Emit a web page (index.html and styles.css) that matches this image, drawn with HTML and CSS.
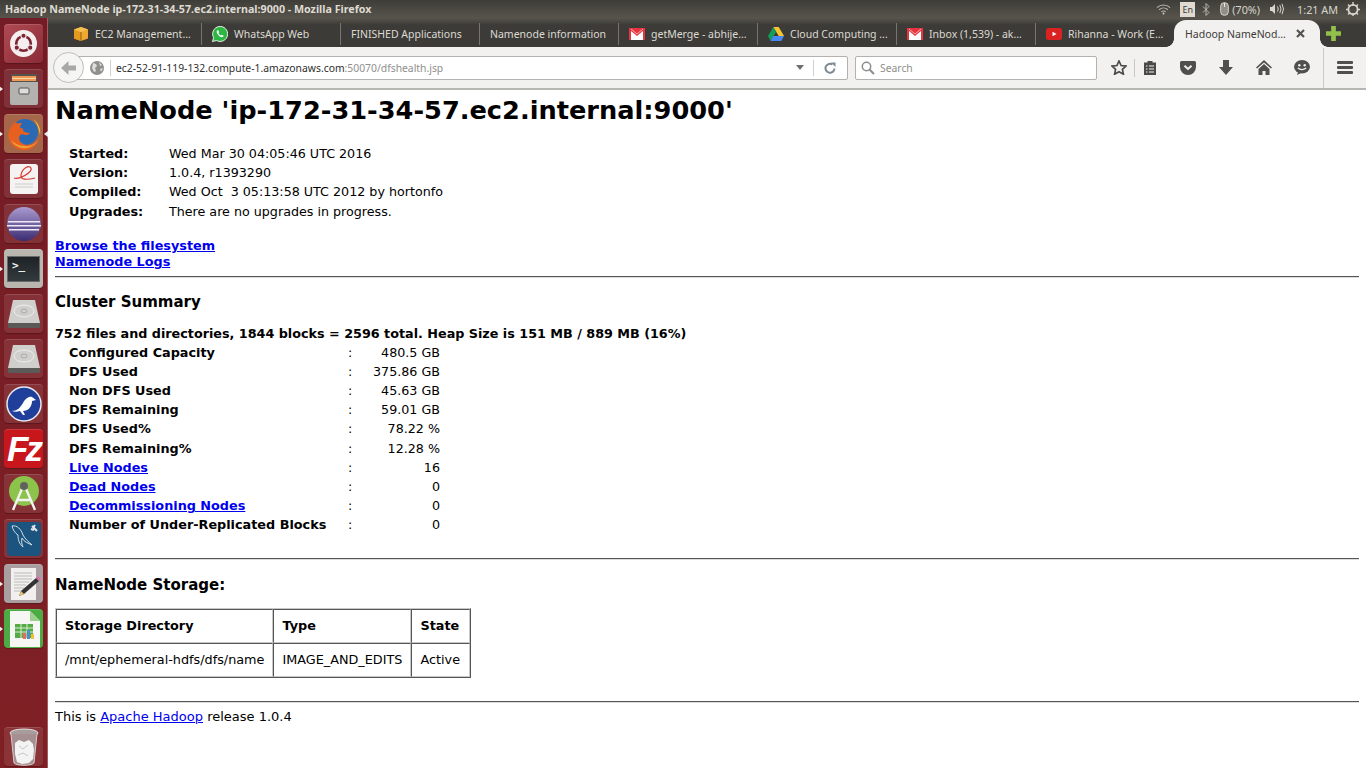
FILE: index.html
```html
<!DOCTYPE html>
<html lang="en">
<head>
  <meta charset="UTF-8" />
  <title>Hadoop NameNode ip-172-31-34-57.ec2.internal:9000</title>
  <link rel="stylesheet" href="styles.css">
</head>
<body>
  <!-- Ubuntu top panel -->
  <div class="panel">
    <div class="win-title">Hadoop NameNode ip-172-31-34-57.ec2.internal:9000 - Mozilla Firefox</div>
    <div class="indicators">
      <svg class="ind-wifi" width="15" height="12" viewBox="0 0 16 12"><path d="M1 4.500C5 .8 11 .8 15 4.500M3.300 6.800C6 4.400 10 4.400 12.700 6.800M5.600 9C7 8 9 8 10.400 9" fill="none" stroke="#b9b7ae" stroke-width="1.100"/><circle cx="8" cy="10.800" r="1" fill="#d8d6cc"/></svg>
      <span class="ind-lang">En</span>
      <svg class="ind-bt" width="8" height="13" viewBox="0 0 8 13"><path d="M1 3.500l6 6-3 3V.5l3 3-6 6" fill="none" stroke="#b9b7ae" stroke-width="1"/></svg>
      <svg class="ind-mouse" width="9" height="14" viewBox="0 0 9 14"><rect x=".7" y=".7" width="7.600" height="12.600" rx="3.500" fill="#8f8d85" stroke="#d8d6cc"/><path d="M4.500 1v4" stroke="#e8e6dc"/></svg>
      <span class="ind-batt">(70%)</span>
      <svg class="ind-vol" width="15" height="12" viewBox="0 0 15 12"><path d="M1 4h2l3-3v10L3 8H1z" fill="#d8d6cc"/><path d="M8.500 3.500q1.500 2.500 0 5M10.800 2q2.400 4 0 8M13 .8q3 5.200 0 10.400" fill="none" stroke="#d8d6cc"/></svg>
      <span class="ind-clock">1:21 AM</span>
      <svg class="ind-gear" width="16" height="16" viewBox="0 0 16 16"><circle cx="8" cy="8.500" r="4.600" fill="none" stroke="#d8d6cc" stroke-width="1.800"/><path d="M8 1v4M8 12v3M1 8.500h3M12 8.500h3M3 3.500l2 2M13 3.500l-2 2M3 13.500l2-2M13 13.500l-2-2" stroke="#d8d6cc" stroke-width="1.400"/></svg>
    </div>
  </div>

  <div class="desktop">
    <!-- Launcher -->
    <div class="launcher">
      <div class="launch-top">
        <div class="tile tile-ubuntu">
          <svg width="27" height="27" viewBox="0 0 26 26"><circle cx="13" cy="13" r="13" fill="#f4efee"/><circle cx="13" cy="13" r="7" fill="none" stroke="#7d2433" stroke-width="2.600"/><circle cx="13" cy="5.500" r="2.500" fill="#7d2433" stroke="#f4efee"/><circle cx="6.500" cy="17" r="2.500" fill="#7d2433" stroke="#f4efee"/><circle cx="19.500" cy="17" r="2.500" fill="#7d2433" stroke="#f4efee"/></svg>
        </div>
        <div class="tile tile-active">
          <svg width="34" height="34" viewBox="0 0 34 34"><path d="M4 2h26v9H4z" fill="#55534f"/><path d="M5 4h24v5H5z" fill="#ee9a56"/><path d="M5 6h24v1H5z" fill="#f7d9a8"/><path d="M3 10h28v21a2 2 0 0 1-2 2H5a2 2 0 0 1-2-2z" fill="#b4b2ae"/><rect x="12" y="16" width="10" height="6" rx="1" fill="#ddd" stroke="#55534f"/></svg>
        </div>
        <div class="tile tile-ff tile-active">
          <svg width="36" height="36" viewBox="0 0 36 36"><circle cx="19" cy="16" r="13" fill="#2a6ab4"/><path d="M27 3c6 4 8 11 7 16-1-6-3-12-7-16z" fill="#f7c334"/><path d="M9 6C4 11 1 17 3 23c2 8 10 12 17 11 8-1 13-7 14-14-2 5-6 9-12 9-5 0-9-3-9-7 0-2 1-3 3-4 3 2 7 1 8-1-2 0-5-1-7-2 1-2 0-3-3-3 0-2 1-3 2-5-4 0-6 1-7-1z" fill="#e8601f"/><path d="M5 24c3 6 10 9 16 8 5-1 9-4 11-8-3 4-8 7-13 6-6 0-11-3-14-6z" fill="#f2a23a"/></svg>
        </div>
        <div class="tile">
          <svg width="30" height="32" viewBox="0 0 30 32"><rect x="1" y="1" width="28" height="30" rx="3" fill="#f5f3f2"/><path d="M5 15C10 17 24 9 22 5 20 2 13 5 12 12c-1 5 6 5 14 3" fill="none" stroke="#d8362e" stroke-width="1.200"/><path d="M6 21h18M6 24h18" stroke="#ccc"/></svg>
        </div>
        <div class="tile">
          <svg width="36" height="36" viewBox="0 0 36 36"><defs><linearGradient id="eclipseFill" x1="0" y1="0" x2="0" y2="1"><stop offset="0" stop-color="#a99ad0"/><stop offset="1" stop-color="#3d2d72"/></linearGradient></defs><circle cx="18" cy="18" r="17" fill="url(#eclipseFill)"/><path d="M2 15h32v1.500H2zM1 19h34v1.500H1zM3 23h30v1.500H3z" fill="#efe9f7"/></svg>
        </div>
        <div class="tile tile-term tile-active">
          <div class="term-screen"><span class="term-prompt">&gt;_</span></div>
        </div>
        <div class="tile">
          <svg width="34" height="30" viewBox="0 0 34 30"><path d="M6 1h22l5 23H1z" fill="#d0cfcc"/><path d="M1 24h32v4a1 1 0 0 1-1 1H2a1 1 0 0 1-1-1z" fill="#5b5a58"/><ellipse cx="17" cy="12" rx="10" ry="6" fill="none" stroke="#eee"/><ellipse cx="17" cy="12" rx="3" ry="2" fill="none" stroke="#aaa"/></svg>
        </div>
        <div class="tile">
          <svg width="34" height="30" viewBox="0 0 34 30"><path d="M6 1h22l5 23H1z" fill="#d0cfcc"/><path d="M1 24h32v4a1 1 0 0 1-1 1H2a1 1 0 0 1-1-1z" fill="#5b5a58"/><ellipse cx="17" cy="12" rx="10" ry="6" fill="none" stroke="#eee"/><ellipse cx="17" cy="12" rx="3" ry="2" fill="none" stroke="#aaa"/></svg>
        </div>
        <div class="tile">
          <svg width="36" height="36" viewBox="0 0 36 36"><circle cx="18" cy="18" r="17" fill="#1f3f9a" stroke="#e8e8ee" stroke-width="1.500"/><path d="M6 25c5 0 8-3 11-8 2-4 6-7 9-6l4 3-4 1c0 6-4 10-9 10l2 4-2 0-3-4c-3 1-6 1-8 0z" fill="#fff"/></svg>
        </div>
        <div class="tile tile-fz">
          <span class="fz-logo">Fz</span>
        </div>
        <div class="tile">
          <svg width="32" height="36" viewBox="0 0 32 36"><circle cx="16" cy="15" r="15" fill="#8cc34a"/><path d="M16 8L5 34M16 8l11 26M9 24h14" fill="none" stroke="#f2f2f2" stroke-width="2.400"/><circle cx="16" cy="10" r="4" fill="#63615d"/></svg>
        </div>
        <div class="tile">
          <svg width="36" height="36" viewBox="0 0 36 36"><rect x="1" y="1" width="34" height="34" rx="4" fill="#1c5480"/><path d="M6 5c5-1 9 3 11 9 2 4 6 7 9 10-4-2-8-3-10-7-1 3 0 7 1 9-4-3-5-8-5-12-3-2-5-5-6-9z" fill="none" stroke="#cfdfe8"/><path d="M26 5l5 5M29 4l-2 3M25 8l3 1" stroke="#e6e6e6" stroke-width="2"/></svg>
        </div>
        <div class="tile tile-editor tile-active">
          <svg width="36" height="36" viewBox="0 0 36 36"><rect x="5" y="2" width="25" height="32" fill="#f1f0ee"/><path d="M8 7h18M8 10h18M8 13h18M8 16h15M8 19h12M8 22h10M8 25h10" stroke="#bbb"/><path d="M13 30l2-5 15-13 3 3-15 13z" fill="#333"/><path d="M13 30l2-5 3 3z" fill="#e9c46a"/><path d="M30 12l2-2 3 3-2 2z" fill="#d86fa8"/></svg>
        </div>
        <div class="tile tile-calc tile-active">
          <svg width="32" height="36" viewBox="0 0 32 36"><path d="M2 0h20l10 10v26H2z" fill="#f6f6f4"/><path d="M22 0l10 10H22z" fill="#9ccf8c"/><path d="M7 13h18v14H7z" fill="#55ab45"/><path d="M7 17h18M7 21h18M13 13v14M19 13v14" stroke="#d8eed2"/><path d="M15 28v-6h3v6z" fill="#e96c5a"/><path d="M19 28v-9h3v9z" fill="#4c8fd0"/><path d="M23 28v-5h3v5z" fill="#f0c040"/></svg>
        </div>
      </div>
      <div class="tile tile-trash">
        <svg width="32" height="38" viewBox="0 0 32 38"><ellipse cx="16" cy="5" rx="14" ry="4" fill="#a89c9c" stroke="#e4e0e0"/><path d="M3 6l3 29c3 3 17 3 20 0l3-29" fill="#a58f90" stroke="#d5cccc"/><path d="M7 15l4-3 5 2 5-2 4 4 1 6-1 9-4 4-7 1-5-2-2-8z" fill="#f4f3f3"/><path d="M11 18l4 3 5-4M10 27l5-2 5 3" fill="none" stroke="#c9c4c4"/></svg>
      </div>
    </div>

    <div class="browser">
      <!-- Tabs -->
      <div class="tabbar">
        <div class="tab">
          <svg class="tab-ico" width="16" height="16" viewBox="0 0 16 16"><path d="M8 1l7 2.500v9L8 15l-7-2.500v-9z" fill="#f0a830"/><path d="M8 6v9L1 12.500v-9z" fill="#e39a1e"/><path d="M8 6l7-2.500L8 1 1 3.500z" fill="#f7c04f"/><path d="M8 6v9" stroke="#8f6212"/></svg>
          <span class="tab-label">EC2 Management...</span>
        </div>
        <div class="tab">
          <svg class="tab-ico" width="16" height="16" viewBox="0 0 16 16"><path d="M.5 15.500l1.100-3.900A7.500 7.500 0 1 1 4.500 14.500z" fill="#2cb742" stroke="#fff" stroke-width=".9"/><path d="M5.300 4.300c-1 1-.8 2.800.9 4.700 1.800 2 3.800 2.800 5 1.800l.5-1-2-1.100-.9.800c-1-.4-2-1.500-2.400-2.400l.8-.8-.9-2.100z" fill="#fff"/></svg>
          <span class="tab-label">WhatsApp Web</span>
        </div>
        <div class="tab"><span class="tab-label">FINISHED Applications</span></div>
        <div class="tab"><span class="tab-label">Namenode information</span></div>
        <div class="tab">
          <svg class="tab-ico" width="16" height="12" viewBox="0 0 16 12"><rect width="16" height="12" fill="#e8343f"/><path d="M2 12V3l6 5 6-5v9z" fill="#fff"/><path d="M2 1l6 5 6-5" fill="none" stroke="#fff" stroke-width=".6"/></svg>
          <span class="tab-label">getMerge - abhije...</span>
        </div>
        <div class="tab">
          <svg class="tab-ico" width="16" height="14" viewBox="0 0 16 14"><path d="M5.300 0h5.400L16 9h-5.300z" fill="#f7c534"/><path d="M5.300 0L0 9l2.700 5L8 5z" fill="#139f5a"/><path d="M2.700 14h10.600L16 9H5.300z" fill="#4688f4"/></svg>
          <span class="tab-label">Cloud Computing ...</span>
        </div>
        <div class="tab">
          <svg class="tab-ico" width="16" height="12" viewBox="0 0 16 12"><rect width="16" height="12" fill="#e8343f"/><path d="M2 12V3l6 5 6-5v9z" fill="#fff"/><path d="M2 1l6 5 6-5" fill="none" stroke="#fff" stroke-width=".6"/></svg>
          <span class="tab-label">Inbox (1,539) - ak...</span>
        </div>
        <div class="tab tab-last">
          <svg class="tab-ico" width="16" height="12" viewBox="0 0 16 12"><rect width="16" height="12" rx="2.500" fill="#d92323"/><path d="M6.500 3.800l4 2.200-4 2.200z" fill="#fff"/></svg>
          <span class="tab-label">Rihanna - Work (E...</span>
        </div>
        <div class="tab-active">
          <span class="tab-label">Hadoop NameNod...</span>
          <svg class="tab-close" width="9" height="9" viewBox="0 0 9 9"><path d="M1 1l7 7M8 1L1 8" stroke="#55534f" stroke-width="2.200"/></svg>
        </div>
        <svg class="tab-new" width="15" height="15" viewBox="0 0 16 16"><path d="M5.500 0h5v5.500H16v5h-5.500V16h-5v-5.500H0v-5h5.500z" fill="#92c04a"/></svg>
      </div>

      <!-- Nav toolbar -->
      <div class="navbar">
        <div class="back-btn">
          <svg width="16" height="14" viewBox="0 0 16 14"><path d="M7.500 0v4.500H15v5H7.500V14L0 7z" fill="#a8a8a6"/></svg>
        </div>
        <div class="urlbar">
          <svg class="globe" width="14" height="14" viewBox="0 0 14 14"><circle cx="7" cy="7" r="7" fill="#8f8f8d"/><path d="M3 2l3 1 1 2-2 2 1 3-2 1-2-4zM9 1l3 3-2 1zM10 8l3-1-2 4z" fill="#dfdfdd"/></svg>
          <span class="url-sep"></span>
          <span class="url-text">ec2-52-91-119-132.compute-1.amazonaws.com<span class="url-dim">:50070/dfshealth.jsp</span></span>
          <span class="url-arrow"></span>
          <span class="url-sep2"></span>
          <svg class="reload" width="12" height="12" viewBox="0 0 12 12"><path d="M10.500 6.500a4.500 4.500 0 1 1-2-4" fill="none" stroke="#7d8a94" stroke-width="2"/><path d="M7 .5h4.500V5z" fill="#7d8a94"/></svg>
        </div>
        <div class="searchbar">
          <svg width="14" height="14" viewBox="0 0 14 14"><circle cx="5.500" cy="5.500" r="4.200" fill="none" stroke="#8d8d8b" stroke-width="1.500"/><path d="M8.500 8.500l4.500 4.500" stroke="#8d8d8b" stroke-width="2"/></svg>
          <span class="search-text">Search</span>
        </div>
        <svg class="nav-ico ico-star" width="16" height="15" viewBox="0 0 16 15"><path d="M8 1l2.100 4.500 4.900.6-3.600 3.300 1 4.800L8 11.800 3.600 14.200l1-4.800L1 6.100l4.900-.6z" fill="none" stroke="#4a4a48" stroke-width="1.700"/></svg>
        <span class="nav-sep"></span>
        <svg class="nav-ico ico-clip" width="14" height="15" viewBox="0 0 14 15"><path d="M1 2.500h3.500V1h5v1.500H13V15H1z" fill="#4a4a48"/><path d="M3 6h1.500M6 6h5M3 9h1.500M6 9h5M3 12h1.500M6 12h5" stroke="#f2f1ef" stroke-width="1.200"/></svg>
        <svg class="nav-ico ico-pocket" width="16" height="14" viewBox="0 0 16 14"><path d="M1.500 0h13A1.500 1.500 0 0 1 16 1.500V6a8 8 0 0 1-16 0V1.500A1.500 1.500 0 0 1 1.500 0z" fill="#4f4f4d"/><path d="M4.500 4.800L8 8l3.500-3.200" fill="none" stroke="#f2f1ef" stroke-width="2"/></svg>
        <svg class="nav-ico ico-down" width="14" height="15" viewBox="0 0 14 15"><path d="M4 0h6v7h4l-7 8-7-8h4z" fill="#4f4f4d"/></svg>
        <svg class="nav-ico ico-home" width="16" height="15" viewBox="0 0 16 15"><path d="M8 0L0 7.500l1 1L8 2.500l7 6 1-1zM8 4l-5.500 5v6H6.500v-4h3v4h4V9z" fill="#4f4f4d"/></svg>
        <svg class="nav-ico ico-smile" width="16" height="15" viewBox="0 0 16 15"><ellipse cx="8" cy="6.800" rx="8" ry="6.800" fill="#4f4f4d"/><path d="M4 12l-1 3 4-2z" fill="#4f4f4d"/><circle cx="5.300" cy="5.300" r="1.200" fill="#f2f1ef"/><circle cx="10.700" cy="5.300" r="1.200" fill="#f2f1ef"/><path d="M3.800 8q4.200 3.200 8.400 0" fill="none" stroke="#f2f1ef" stroke-width="1.300"/></svg>
        <span class="nav-sep nav-sep-menu"></span>
        <div class="hamburger"><i></i><i></i><i></i></div>
      </div>

      <!-- Page -->
      <div class="page">
        <h1>NameNode 'ip-172-31-34-57.ec2.internal:9000'</h1>

        <table class="info-table">
          <tr><td class="info-key">Started:</td><td>Wed Mar 30 04:05:46 UTC 2016</td></tr>
          <tr><td class="info-key">Version:</td><td>1.0.4, r1393290</td></tr>
          <tr><td class="info-key">Compiled:</td><td>Wed Oct&nbsp; 3 05:13:58 UTC 2012 by hortonfo</td></tr>
          <tr><td class="info-key">Upgrades:</td><td>There are no upgrades in progress.</td></tr>
        </table>

        <div class="page-links">
          <b><a href="#">Browse the filesystem</a></b><br>
          <b><a href="#">Namenode Logs</a></b>
        </div>
        <hr>

        <h3 class="summary-title">Cluster Summary</h3>
        <b class="summary-line">752 files and directories, 1844 blocks = 2596 total. Heap Size is 151 MB / 889 MB (16%)</b>
        <table class="summary-table">
          <tr><td class="sum-key">Configured Capacity</td><td class="sum-sep">:</td><td class="sum-val">480.5 GB</td></tr>
          <tr><td class="sum-key">DFS Used</td><td class="sum-sep">:</td><td class="sum-val">375.86 GB</td></tr>
          <tr><td class="sum-key">Non DFS Used</td><td class="sum-sep">:</td><td class="sum-val">45.63 GB</td></tr>
          <tr><td class="sum-key">DFS Remaining</td><td class="sum-sep">:</td><td class="sum-val">59.01 GB</td></tr>
          <tr><td class="sum-key">DFS Used%</td><td class="sum-sep">:</td><td class="sum-val">78.22 %</td></tr>
          <tr><td class="sum-key">DFS Remaining%</td><td class="sum-sep">:</td><td class="sum-val">12.28 %</td></tr>
          <tr><td class="sum-key"><a href="#">Live Nodes</a></td><td class="sum-sep">:</td><td class="sum-val">16</td></tr>
          <tr><td class="sum-key"><a href="#">Dead Nodes</a></td><td class="sum-sep">:</td><td class="sum-val">0</td></tr>
          <tr><td class="sum-key"><a href="#">Decommissioning Nodes</a></td><td class="sum-sep">:</td><td class="sum-val">0</td></tr>
          <tr><td class="sum-key">Number of Under-Replicated Blocks</td><td class="sum-sep">:</td><td class="sum-val">0</td></tr>
        </table>
        <hr class="hr-storage">

        <h3 class="storage-title">NameNode Storage:</h3>
        <table class="storage-table">
          <tr><th>Storage Directory</th><th>Type</th><th>State</th></tr>
          <tr><td>/mnt/ephemeral-hdfs/dfs/name</td><td>IMAGE_AND_EDITS</td><td>Active</td></tr>
        </table>
        <hr class="hr-foot">
        <div class="foot">This is <a href="#">Apache Hadoop</a> release 1.0.4</div>
      </div>
    </div>
  </div>
</body>
</html>
```

FILE: styles.css
```css
html, body {
  margin: 0;
  height: 100%;
  overflow: hidden;
}
body {
  width: 1366px;
  height: 768px;
  font-family: "DejaVu Sans", sans-serif;
  font-size: 12.7px;
  background: #fff;
  color: #000;
}

/* top panel */
.panel {
  height: 18px;
  background: linear-gradient(#3e3d38, #56544c);
  display: flex;
  justify-content: space-between;
  align-items: center;
  font-family: "Noto Sans", sans-serif;
}
.win-title {
  margin-left: 5px;
  font-size: 10.7px;
  font-weight: 700;
  color: #dfdbd2;
}
.indicators {
  display: flex;
  align-items: center;
  color: #d8d6cc;
  font-size: 10.8px;
}
.ind-wifi { margin-right: 9px; }
.ind-lang {
  width: 15px;
  height: 15px;
  line-height: 15px;
  text-align: center;
  background: #dfdbd2;
  color: #3c3b37;
  font-size: 9px;
  margin-right: 7px;
}
.ind-bt { margin-right: 10px; }
.ind-mouse { margin-right: 3px; }
.ind-batt { margin-right: 9px; }
.ind-vol { margin-right: 13px; }
.ind-clock { margin-right: 7px; }
.ind-gear { margin-right: 5px; }

.desktop {
  display: flex;
  height: 750px;
}

/* launcher */
.launcher {
  width: 48px;
  flex: none;
  border-right: 1px solid #a55a5e;
  background: linear-gradient(#731c25, #7f2024);
  display: flex;
  flex-direction: column;
  justify-content: space-between;
  align-items: center;
  padding: 6px 0 2px;
  box-sizing: border-box;
}
.launch-top {
  display: flex;
  flex-direction: column;
  gap: 6px;
}
.tile {
  width: 39px;
  height: 39px;
  border-radius: 4px;
  background: rgba(255, 255, 255, 0.09);
  box-shadow: inset 0 1px 0 rgba(255, 255, 255, 0.14), 0 1px 1px rgba(0, 0, 0, 0.25);
  display: flex;
  align-items: center;
  justify-content: center;
  position: relative;
}
.tile-ubuntu { background: linear-gradient(135deg, #b04a54, #8a2c36); }
.tile-ff { background: #a5664a; }
.tile-term { background: #b9b6b0; }
.tile-editor { background: #a99fa0; }
.tile-calc { background: #4dab45; }
.tile-active::before {
  content: "";
  position: absolute;
  left: -5px;
  top: 17px;
  border: 3px solid transparent;
  border-left: 4px solid #eee;
  border-right: 0;
}
.tile-ff::after {
  content: "";
  position: absolute;
  right: -5px;
  top: 17px;
  border: 3px solid transparent;
  border-right: 4px solid #eee;
  border-left: 0;
}
.term-screen {
  width: 33px;
  height: 26px;
  background: linear-gradient(#1d2226, #333a3e);
  border: 1px solid #6a6a68;
  box-sizing: border-box;
  color: #eee;
}
.term-prompt {
  font-family: "DejaVu Sans Mono", monospace;
  font-size: 11px;
  font-weight: 700;
  padding-left: 4px;
}
.tile-fz { background: #c8171c; }
.fz-logo {
  font-family: "Liberation Sans", sans-serif;
  font-style: italic;
  font-weight: 700;
  font-size: 35px;
  letter-spacing: -3px;
  color: #fff;
}

/* browser */
.browser {
  flex: 1;
  display: flex;
  flex-direction: column;
  min-width: 0;
}
.tabbar {
  height: 29px;
  box-sizing: border-box;
  padding: 2px 0 0 15px;
  background: linear-gradient(#56544c, #3c3b37 7px);
  display: flex;
  align-items: center;
  font-family: "Noto Sans", sans-serif;
  font-size: 10.5px;
  color: #dcdad2;
}
.tab {
  width: 139px;
  height: 22px;
  box-sizing: border-box;
  border-right: 1px solid #77756e;
  display: flex;
  align-items: center;
  padding-left: 10px;
  gap: 6px;
  white-space: nowrap;
  overflow: hidden;
  flex: none;
}
.tab-ico { flex: none; }
.tab-last { border-right: 0; }
.tab-active {
  width: 146px;
  height: 27px;
  box-sizing: border-box;
  margin-left: -1px;
  padding: 0 15px 0 11px;
  background: #f2f1ef;
  color: #3c3b37;
  border-radius: 12px 12px 0 0;
  display: flex;
  align-items: center;
  justify-content: space-between;
  align-self: flex-end;
  flex: none;
  position: relative;
}
/* little flares where the active tab meets the toolbar */
.tab-active::before, .tab-active::after {
  content: "";
  position: absolute;
  bottom: 0;
  width: 8px;
  height: 8px;
}
.tab-active::before {
  left: -8px;
  background: radial-gradient(circle at 0 0, transparent 7.5px, #f2f1ef 8px);
}
.tab-active::after {
  right: -8px;
  background: radial-gradient(circle at 100% 0, transparent 7.5px, #f2f1ef 8px);
}
.tab-new { margin-left: 6px; }

.navbar {
  height: 43px;
  box-sizing: border-box;
  background: #f2f1ef;
  border-bottom: 2px solid #b7b6b2;
  display: flex;
  align-items: center;
  padding-left: 5px;
  font-family: "Noto Sans", sans-serif;
}
.back-btn {
  width: 31px;
  height: 31px;
  box-sizing: border-box;
  border: 1px solid #bdbdba;
  border-radius: 50%;
  background: #f5f5f3;
  display: flex;
  align-items: center;
  justify-content: center;
  flex: none;
  position: relative;
  z-index: 1;
}
.urlbar {
  width: 771px;
  height: 24px;
  box-sizing: border-box;
  margin-left: -7px;
  padding-left: 12px;
  background: #fff;
  border: 1px solid #b3b2ae;
  border-radius: 0 2px 2px 0;
  display: flex;
  align-items: center;
  flex: none;
}
.globe { flex: none; }
.url-sep, .url-sep2 {
  width: 1px;
  height: 16px;
  background: #cfcfcd;
  flex: none;
}
.url-sep { margin: 0 5px 0 6px; }
.url-sep2 { margin: 0 10px 0 9px; }
.url-text {
  flex: 1;
  font-size: 10.35px;
  color: #2f2f2d;
}
.url-dim { color: #8f8f8d; }
.url-arrow {
  width: 0;
  height: 0;
  border: 4px solid transparent;
  border-top: 5px solid #6f6f6d;
  border-bottom: 0;
}
.reload { margin-right: 11px; }
.searchbar {
  width: 242px;
  height: 24px;
  box-sizing: border-box;
  margin-left: 7px;
  padding-left: 5px;
  background: #fff;
  border: 1px solid #b3b2ae;
  border-radius: 2px;
  display: flex;
  align-items: center;
  gap: 5px;
  flex: none;
}
.search-text {
  font-size: 10.35px;
  color: #8f8f8d;
}
.nav-ico { flex: none; }
.ico-star { margin-left: 14px; }
.nav-sep {
  width: 1px;
  height: 18px;
  background: #c9c8c4;
  margin-left: 7px;
  flex: none;
}
.ico-clip { margin-left: 8px; }
.ico-pocket { margin-left: 23px; }
.ico-down { margin-left: 23px; }
.ico-home { margin-left: 23px; }
.ico-smile { margin-left: 22px; }
.nav-sep-menu {
  height: 40px;
  margin-left: 13px;
}
.hamburger {
  margin-left: 13px;
  display: flex;
  flex-direction: column;
  gap: 2px;
}
.hamburger i {
  display: block;
  width: 16px;
  height: 3px;
  background: #4f4f4d;
  border-radius: 1px;
}

/* page content */
.page {
  flex: 1;
  padding: 0 7px;
  background: #fff;
}
h1 {
  font-size: 25.65px;
  line-height: 31px;
  margin: 5px 0 0;
}
b, .info-key, .sum-key { font-size: 12.8px; }
a { color: #0000ee; }
hr {
  margin: 0;
  border: 0;
  border-top: 1px solid #555;
  border-bottom: 1px solid #ddd;
}
.info-table {
  border-collapse: collapse;
  margin: 18px 0 0 14px;
}
.info-table td {
  padding: 0;
  height: 19px;
}
.info-table tr:nth-child(4) td { padding-top: 1px; }
.info-key {
  font-weight: 700;
  width: 100px;
}
.page-links {
  margin-top: 17px;
  line-height: 16px;
}
.page-links + hr { margin-top: 6px; }
.summary-title {
  font-size: 15px;
  line-height: 19px;
  margin: 15px 0 0;
}
.summary-line {
  display: block;
  margin-top: 14px;
  font-size: 12.75px;
  line-height: 16px;
}
.summary-table {
  border-collapse: collapse;
  margin: 1px 0 0 14px;
}
.summary-table td {
  padding: 0;
  height: 19px;
}
.summary-table tr:nth-child(6) td { padding-top: 1px; }
.sum-key {
  font-weight: 700;
  width: 279px;
}
.sum-sep { width: 15px; }
.sum-val {
  text-align: right;
  width: 77px;
}
.hr-storage { margin-top: 24px; }
.storage-title {
  font-size: 15px;
  line-height: 19px;
  margin: 16px 0 0;
}
.storage-table {
  border-collapse: separate;
  border-spacing: 0;
  margin-top: 13px;
  font-size: 12.8px;
  border: 1px solid;
  border-color: #c8c8c8 #555 #555 #c8c8c8;
}
.storage-table th, .storage-table td {
  padding: 0 8px 1px;
  height: 31px;
  text-align: left;
  border: 1px solid;
  border-color: #555 #c8c8c8 #c8c8c8 #555;
}
.storage-table th:last-child { padding-right: 10px; }
.hr-foot { margin-top: 23px; }
.foot {
  margin-top: 6px;
  font-size: 13px;
  line-height: 16px;
}
```
